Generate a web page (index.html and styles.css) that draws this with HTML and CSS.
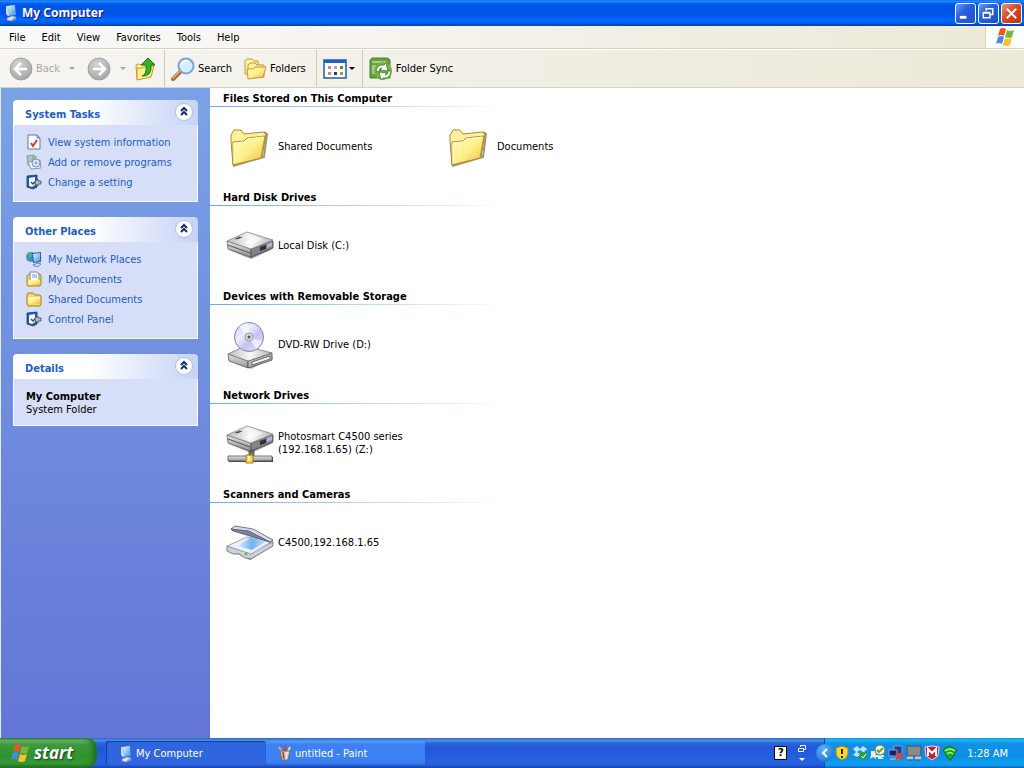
FILE: index.html
```
<!DOCTYPE html>
<html lang="en">
<head>
  <meta charset="utf-8">
  <title>My Computer</title>
  <link rel="stylesheet" href="styles.css">
</head>
<body>
<!-- shared icons -->
<svg class="defs" aria-hidden="true">
  <defs>
    <linearGradient id="g-folder" x1="0" y1="0" x2="1" y2="1">
      <stop offset="0" stop-color="#fffbc0"/><stop offset=".5" stop-color="#fff08a"/><stop offset="1" stop-color="#f0b83c"/>
    </linearGradient>
    <linearGradient id="g-metal" x1="0" y1="0" x2="1" y2="0">
      <stop offset="0" stop-color="#bcbcbc"/><stop offset=".5" stop-color="#f8f8fa"/><stop offset="1" stop-color="#b4b4bc"/>
    </linearGradient>
    <linearGradient id="g-side" x1="0" y1="0" x2="0" y2="1">
      <stop offset="0" stop-color="#e4e4e4"/><stop offset="1" stop-color="#949494"/>
    </linearGradient>
    <linearGradient id="g-disc" x1="0" y1="0" x2="1" y2="1">
      <stop offset="0" stop-color="#c4c8ee"/><stop offset=".35" stop-color="#eceefc"/><stop offset=".6" stop-color="#c4c2f4"/><stop offset="1" stop-color="#e8e8fa"/>
    </linearGradient>
    <linearGradient id="g-glass" x1="0" y1="0" x2="1" y2="0">
      <stop offset="0" stop-color="#e4f2fe"/><stop offset=".5" stop-color="#6cb4f2"/><stop offset="1" stop-color="#d2e2f8"/>
    </linearGradient>
    <linearGradient id="g-screen" x1="0" y1="0" x2="1" y2="1">
      <stop offset="0" stop-color="#e4f6ff"/><stop offset="1" stop-color="#3e9cec"/>
    </linearGradient>
    <radialGradient id="g-ball" cx=".4" cy=".3" r=".8">
      <stop offset="0" stop-color="#d4d4d4"/><stop offset="1" stop-color="#a0a0a0"/>
    </radialGradient>
  </defs>
  <symbol id="i-computer" viewBox="0 0 16 16">
    <path d="M3 1l9-1 1 10-8 1z" fill="#5c9ce4"/>
    <path d="M5 1l7-1v9l-6 1z" fill="url(#g-screen)"/>
    <path d="M3 1h2l1 10H5L3 9z" fill="#c4dcf4"/>
    <path d="M4 13l5-2 4 1v2l-5 2-4-1z" fill="#e0e4ea" stroke="#7c8ca4" stroke-width=".6"/>
    <path d="M9 14l4-2v2l-4 2z" fill="#8098bc"/>
  </symbol>
  <symbol id="i-flag" viewBox="0 0 20 20">
    <path d="M5 2q3-2 6 0L9 9Q6 7 3 9z" fill="#e8552c"/>
    <path d="M12 3q3 2 7 0l-2 7q-3 2-7 0z" fill="#7cb440"/>
    <path d="M3 10q3-2 6 0l-2 7Q4 15 1 17z" fill="#4a8ae4"/>
    <path d="M10 11q3 2 7 0l-2 7q-3 2-7 0z" fill="#f6c32c"/>
  </symbol>
  <symbol id="i-panel" viewBox="0 0 16 16">
    <path d="M1 2l10-1v12l-4 2-6-2z" fill="#245cac" stroke="#123c7c" stroke-width=".8"/>
    <path d="M3 4l6-1v8l-3 2-3-1z" fill="#f0f6ff"/>
    <path d="M5 8l2 2 3-3" fill="none" stroke="#444c58" stroke-width="1.500"/>
    <path d="M9 7l3-2v2h3v3h-3v2L9 10z" fill="#b8bcc4" stroke="#3c4450" stroke-width=".8"/>
  </symbol>
  <symbol id="i-folder-s" viewBox="0 0 16 16">
    <path d="M1 13V4l1-2h5l2 2h5l1 1v8l-1 2H2z" fill="#f8d860" stroke="#b07c18"/>
    <path d="M2 13V7l2-1h10v7z" fill="url(#g-folder)"/>
    <path d="M2 7h12" stroke="#fffce0"/>
  </symbol>
  <symbol id="i-folder" viewBox="0 0 48 48">
    <path d="M7 43l31-9 3-23-3-2" fill="none" stroke="#706848" stroke-width="2" opacity=".7"/>
    <path d="M5 18V12l3-5h7l3 4 19-2 3 2-4 23L7 42z" fill="#fff09c" stroke="#a88a34"/>
    <path d="M7 19l11-1 3-3 18-2-4 22-28 7z" fill="url(#g-folder)" stroke="#b08c30"/>
    <path d="M8 40V20l10-1 4-3 15-2" fill="none" stroke="#fffde0"/>
  </symbol>
  <symbol id="i-drive" viewBox="0 0 48 28">
    <path d="M3 19l22 9 22-10-20 2z" fill="#555" opacity=".6"/>
    <path d="M1 10l24 8v8L2 18z" fill="url(#g-side)" stroke="#666" stroke-width=".8"/>
    <path d="M25 18l22-8v7L25 26z" fill="#84848c" stroke="#444" stroke-width=".8"/>
    <path d="M1 10L21 1l26 8-22 9z" fill="url(#g-metal)" stroke="#888" stroke-width=".8"/>
    <path d="M2 14l22 8" stroke="#555"/>
    <path d="M34 16l6-2v4l-6 2z" fill="#26332c"/>
    <path d="M41 13l5-2v4l-5 2z" fill="#b4b4d8"/>
    <path d="M9 8l5-2M11 8l5-2" stroke="#444"/>
    <path d="M18 12l10-7 9 3-11 6z" fill="#fff" opacity=".55"/>
  </symbol>
</svg>

<header class="titlebar">
  <svg class="titlebar-icon"><use href="#i-computer"/></svg>
  <h1 class="titlebar-text">My Computer</h1>
  <div class="window-buttons">
    <button class="window-btn" aria-label="Minimize">
      <svg viewBox="0 0 20 20"><path d="M4 14h7" stroke="#fff" stroke-width="3"/></svg>
    </button>
    <button class="window-btn" aria-label="Restore">
      <svg viewBox="0 0 20 20"><path d="M7.500 7V5h7v6H12M7 5h8M4.500 9.500h7v5h-7zM4 9h8" fill="none" stroke="#fff" stroke-width="1.500"/></svg>
    </button>
    <button class="window-btn close" aria-label="Close">
      <svg viewBox="0 0 20 20"><path d="M5 5l10 10M15 5L5 15" stroke="#fff" stroke-width="2"/></svg>
    </button>
  </div>
</header>

<nav class="menubar">
  <button class="menu">File</button>
  <button class="menu">Edit</button>
  <button class="menu">View</button>
  <button class="menu">Favorites</button>
  <button class="menu">Tools</button>
  <button class="menu">Help</button>
  <div class="brand"><svg class="brand-icon"><use href="#i-flag"/></svg></div>
</nav>

<div class="toolbar">
  <button class="tool disabled">
    <svg class="tool-icon" viewBox="0 0 24 24"><circle cx="12" cy="12" r="11" fill="url(#g-ball)" stroke="#989898" stroke-width=".8"/><path d="M18 12H7M12 6l-6 6 6 6" fill="none" stroke="#fff" stroke-width="2.600"/></svg>
    Back
  </button>
  <button class="drop disabled" aria-label="Back history"></button>
  <button class="tool forward" aria-label="Forward">
    <svg class="tool-icon" viewBox="0 0 24 24"><circle cx="12" cy="12" r="11" fill="url(#g-ball)" stroke="#989898" stroke-width=".8"/><path d="M6 12h11M12 6l6 6-6 6" fill="none" stroke="#fff" stroke-width="2.600"/></svg>
  </button>
  <button class="drop disabled" aria-label="Forward history"></button>
  <button class="tool up" aria-label="Up">
    <svg class="tool-icon" viewBox="0 0 24 24">
      <path d="M2 8l2-1 5 1 11-2-3 12-14 4z" fill="url(#g-folder)" stroke="#c89830"/>
      <path d="M3 23V11l5 0 2-1 10-1-3 11z" fill="#fff08c" stroke="#c89830"/>
      <path d="M8 19q5-1 4-11H7l7-7 7 7h-4q1 12-9 11z" fill="#38b028" stroke="#187818"/>
    </svg>
  </button>
  <span class="separator"></span>
  <button class="tool">
    <svg class="tool-icon" viewBox="0 0 24 24">
      <path d="M2 22l8-8" stroke="#a86038" stroke-width="4" stroke-linecap="round"/>
      <path d="M2 21l7-7" stroke="#e0a878" stroke-width="2" stroke-linecap="round"/>
      <circle cx="15" cy="9" r="7.500" fill="#d4eefc" stroke="#7ca4d4" stroke-width="2"/>
      <path d="M10 8q2-5 7-4" fill="none" stroke="#fff" stroke-width="2"/>
    </svg>
    Search
  </button>
  <button class="tool folders">
    <svg class="tool-icon" viewBox="0 0 24 24">
      <path d="M2 17V4l2-2h5l2 2h4v13z" fill="url(#g-folder)" stroke="#c89830"/>
      <path d="M5 20V8l2-2h5l2 2h7v12z" fill="#fff09c" stroke="#c89830"/>
      <path d="M5 22L4 12h6l2-2h11l-3 10z" fill="url(#g-folder)" stroke="#c89830"/>
    </svg>
    Folders
  </button>
  <span class="separator"></span>
  <button class="tool views" aria-label="Views">
    <svg class="tool-icon" viewBox="0 0 24 24">
      <path d="M1 3h22v18H1z" fill="#fff" stroke="#1c5cb0" stroke-width="1.500"/>
      <path d="M1 3h22v3H1z" fill="#1c64c4"/>
      <path d="M5 9h3v3H5z" fill="#8c9cc4"/><path d="M11 9h3v3h-3z" fill="#dc9c78"/><path d="M17 9h3v3h-3z" fill="#48943c"/>
      <path d="M5 15h3v3H5z" fill="#d88460"/><path d="M11 15h3v3h-3z" fill="#1c4484"/><path d="M17 15h3v3h-3z" fill="#b8942c"/>
    </svg>
    <span class="caret"></span>
  </button>
  <span class="separator"></span>
  <button class="tool sync">
    <svg class="tool-icon" viewBox="0 0 24 24">
      <path d="M1 3l2-2h16l2 2v18H1z" fill="#68a040" stroke="#4c8030"/>
      <path d="M3 4h14v2H3zM3 8h4v9H3z" fill="#a4cc80"/>
      <circle cx="14" cy="14" r="9" fill="#78b048"/>
      <path d="M7 14q1-7 8-6l2-2 2 8-8-1 2-2q-3 0-3 4z" fill="#f4faee" stroke="#40802c" stroke-width=".8"/>
      <path d="M22 14q-1 8-8 7l-2 2-2-8 8 1-2 2q3 0 3-4z" fill="#f4faee" stroke="#40802c" stroke-width=".8"/>
    </svg>
    Folder Sync
  </button>
</div>

<div class="content">
  <aside class="sidebar">
    <section class="panel">
      <div class="panel-head">
        <h2>System Tasks</h2>
        <button class="collapse" aria-label="Collapse System Tasks"><svg viewBox="0 0 16 16"><path d="M5 7l3-3 3 3M5 11l3-3 3 3"/></svg></button>
      </div>
      <ul class="panel-body">
        <li><a href="#"><svg viewBox="0 0 16 16"><path d="M2 1h9l3 3v11H2z" fill="#fafcff" stroke="#6478a0"/><path d="M11 1v3h3" fill="none" stroke="#6478a0"/><path d="M5 9l2 3 4-6" fill="none" stroke="#d43c2c" stroke-width="2"/></svg>View system information</a></li>
        <li><a href="#"><svg viewBox="0 0 16 16"><path d="M1 2l7-1 1 5-4 6-3-1z" fill="#b4c0cc" stroke="#8898a8"/><path d="M6 2h5l-1 4H6z" fill="#8cbc80"/><path d="M2 8l12-2 1 8-10 1z" fill="#f0f4fa" stroke="#8898b0"/><circle cx="10" cy="9" r="4" fill="#dce8f8" stroke="#7c90b4"/><circle cx="10" cy="9" r="1" fill="#fff" stroke="#7c90b4"/></svg>Add or remove programs</a></li>
        <li><a href="#"><svg><use href="#i-panel"/></svg>Change a setting</a></li>
      </ul>
    </section>

    <section class="panel">
      <div class="panel-head">
        <h2>Other Places</h2>
        <button class="collapse" aria-label="Collapse Other Places"><svg viewBox="0 0 16 16"><path d="M5 7l3-3 3 3M5 11l3-3 3 3"/></svg></button>
      </div>
      <ul class="panel-body">
        <li><a href="#"><svg viewBox="0 0 16 16"><circle cx="5" cy="6" r="5" fill="#3c8cd8"/><path d="M2 3q3-2 4 0T4 7Q1 7 2 3z" fill="#54b858"/><path d="M6 2l9-1v10l-8 1z" fill="#2c5cb0"/><path d="M7 3l7-1v8l-6 1z" fill="url(#g-screen)"/><path d="M7 14l5-2 3 1-4 3z" fill="#d8dce4" stroke="#505c74" stroke-width=".7"/></svg>My Network Places</a></li>
        <li><a href="#"><svg viewBox="0 0 16 16"><path d="M1 13V5l2-2h11l1 2v8l-1 2H2z" fill="#f8d860" stroke="#b07c18"/><path d="M4 1h7l2 2v7H4z" fill="#fff" stroke="#7088b8"/><path d="M6 4h5M6 6h5" stroke="#6c94dc"/><path d="M2 9h12v5H2z" fill="url(#g-folder)"/></svg>My Documents</a></li>
        <li><a href="#"><svg><use href="#i-folder-s"/></svg>Shared Documents</a></li>
        <li><a href="#"><svg><use href="#i-panel"/></svg>Control Panel</a></li>
      </ul>
    </section>

    <section class="panel">
      <div class="panel-head">
        <h2>Details</h2>
        <button class="collapse" aria-label="Collapse Details"><svg viewBox="0 0 16 16"><path d="M5 7l3-3 3 3M5 11l3-3 3 3"/></svg></button>
      </div>
      <div class="panel-body details">
        <strong>My Computer</strong>
        <p>System Folder</p>
      </div>
    </section>
  </aside>

  <main class="files">
    <section class="group">
      <h2>Files Stored on This Computer</h2>
      <div class="tiles">
        <a class="tile" href="#"><svg><use href="#i-folder"/></svg><span>Shared Documents</span></a>
        <a class="tile" href="#"><svg><use href="#i-folder"/></svg><span>Documents</span></a>
      </div>
    </section>
    <section class="group">
      <h2>Hard Disk Drives</h2>
      <div class="tiles">
        <a class="tile" href="#"><svg viewBox="0 0 48 48"><use href="#i-drive" y="9" width="48" height="28"/></svg><span>Local Disk (C:)</span></a>
      </div>
    </section>
    <section class="group">
      <h2>Devices with Removable Storage</h2>
      <div class="tiles">
        <a class="tile" href="#">
          <svg viewBox="0 0 48 48">
            <path d="M4 38l21 10 22-11-3-4z" fill="#555" opacity=".5"/>
            <path d="M2 33l20 7v7L3 40z" fill="url(#g-side)" stroke="#555" stroke-width=".8"/>
            <path d="M22 40l24-8v7l-24 8z" fill="#b4b4b4" stroke="#444" stroke-width=".8"/>
            <path d="M2 33l17-8 27 7-24 8z" fill="url(#g-metal)" stroke="#777" stroke-width=".8"/>
            <path d="M26 41l18-6v3l-18 6z" fill="#f4f4f4" stroke="#555" stroke-width=".8"/>
            <circle cx="23" cy="16" r="14.500" fill="url(#g-disc)" stroke="#84849c"/>
            <path d="M23 16L13 6q4-4 9-4z" fill="#fff" opacity=".6"/>
            <path d="M23 16l7 12q4-3 6-8z" fill="#fff" opacity=".6"/>
            <circle cx="23" cy="16" r="4" fill="#d8d8e0" stroke="#9c9cb0"/>
            <circle cx="23" cy="16" r="1.500" fill="#555"/>
          </svg>
          <span>DVD-RW Drive (D:)</span>
        </a>
      </div>
    </section>
    <section class="group">
      <h2>Network Drives</h2>
      <div class="tiles">
        <a class="tile" href="#">
          <svg viewBox="0 0 48 48">
            <path d="M23 30h5v7h-5z" fill="#777" stroke="#444" stroke-width=".8"/>
            <path d="M3 37h44v5H3z" fill="#444"/>
            <path d="M2 36h44v5H2z" fill="url(#g-side)" stroke="#555" stroke-width=".8"/>
            <path d="M20 35h7v8h-7z" fill="#f8d450" stroke="#a07818"/>
            <path d="M22 36h2v5h-2z" fill="#fff6b0"/>
            <use href="#i-drive" y="5" width="48" height="28"/>
          </svg>
          <span>Photosmart C4500 series (192.168.1.65) (Z:)</span>
        </a>
      </div>
    </section>
    <section class="group">
      <h2>Scanners and Cameras</h2>
      <div class="tiles">
        <a class="tile" href="#">
          <svg viewBox="0 0 48 48">
            <path d="M4 34l8 1 12 6 23-15-21 9z" fill="#445" opacity=".7"/>
            <path d="M1 27l21 6 25-10v4L25 40l-6-1-6-4H7l-6-3z" fill="#ccd0dc" stroke="#667" stroke-width=".8"/>
            <path d="M1 27l20-9 26 4-22 13z" fill="#eef0f6" stroke="#88909c" stroke-width=".8"/>
            <path d="M11 27l13-8 17 3-15 9z" fill="url(#g-glass)"/>
            <path d="M5 10l4-3 18 3 20 11-3 2-20-7z" fill="#dcdcec" stroke="#556" stroke-width=".8"/>
            <path d="M5 10l18 2 21 11-20-6L7 12z" fill="#7c849c" stroke="#556" stroke-width=".8"/>
            <circle cx="20" cy="35" r="1.500" fill="#48c848"/>
          </svg>
          <span>C4500,192.168.1.65</span>
        </a>
      </div>
    </section>
  </main>
</div>

<footer class="taskbar">
  <button class="start"><svg class="start-icon"><use href="#i-flag"/></svg>start</button>
  <div class="tasks">
    <button class="task active"><svg><use href="#i-computer"/></svg>My Computer</button>
    <button class="task">
      <svg viewBox="0 0 16 16">
        <path d="M6 9L2 2" stroke="#e0b050" stroke-width="2"/><path d="M8 9V1" stroke="#c84830" stroke-width="2"/><path d="M10 9l3-7" stroke="#f0d8a0" stroke-width="2"/>
        <path d="M3 6h10l-2 9H5z" fill="#d8c8b8" stroke="#6c5850" stroke-width=".8"/>
        <path d="M6 7l1 7" stroke="#a03828" stroke-width="1.500"/><path d="M10 7l-1 7" stroke="#fff"/>
      </svg>
      untitled - Paint
    </button>
  </div>
  <div class="langbar">
    <button class="help" aria-label="Help">?</button>
    <button class="restore" aria-label="Language bar options">
      <svg viewBox="0 0 10 18"><path d="M3.500 3V1.500h5v4H7M1.500 4.500h5v3h-5z" fill="none" stroke="#fff"/><path d="M2 14h6l-3 3z" fill="#fff"/></svg>
    </button>
  </div>
  <div class="tray">
    <button class="tray-toggle" aria-label="Show hidden icons"><svg viewBox="0 0 18 18"><path d="M11 5L7 9l4 4" fill="none" stroke="#fff" stroke-width="2"/></svg></button>
    <div class="tray-icons">
      <svg viewBox="0 0 16 16"><path d="M8 1l6 2v5q0 5-6 7-6-2-6-7V3z" fill="#fcd434" stroke="#a88010"/><path d="M8 4v5M8 11v2" stroke="#302400" stroke-width="2"/></svg>
      <svg viewBox="0 0 16 16"><path d="M1 4l4-3 3 3 3-3 4 3-3 3 3 3-4 2-3-2-3 2-4-2 3-3z" fill="#b8e4fc"/><path d="M5 7l3-2 3 2-3 2z" fill="#2c84d0"/><circle cx="11" cy="11" r="4" fill="#2ca038"/><path d="M9 11l2 2 3-4" fill="none" stroke="#fff"/></svg>
      <svg viewBox="0 0 16 16"><path d="M1 6h4l1 3v5l-3-2-3 2 1-4zM8 9l6 5H8zM1 10h13v2H1z" fill="#e8ece8"/><circle cx="10" cy="5" r="5" fill="#f0f4ec" stroke="#607860"/><path d="M7 5l2 2 4-4" fill="none" stroke="#68a81c" stroke-width="2"/></svg>
      <svg viewBox="0 0 16 16"><path d="M6 1h8v8H6z" fill="#243c8c" stroke="#8898bc"/><path d="M1 5h8v6H1z" fill="#10246c" stroke="#90a0c4"/><path d="M2 13h9v2H2z" fill="#98a4bc"/><path d="M8 8l7 7M15 8l-7 7" stroke="#e83c30" stroke-width="2"/></svg>
      <svg viewBox="0 0 16 16"><path d="M1 1h14v10H1z" fill="#888c88" stroke="#444c5c"/><path d="M1 13h6M9 13h6" stroke="#c4c8cc" stroke-width="3"/><path d="M1 15h6M9 15h6" stroke="#445068"/></svg>
      <svg viewBox="0 0 16 16"><path d="M1 2l7-1 7 1-1 9-6 4-6-4z" fill="#c81c34" stroke="#f0d8dc"/><path d="M4 11V4l4 4 4-4v7" fill="none" stroke="#fff" stroke-width="2"/></svg>
      <svg viewBox="0 0 16 16"><path d="M1 5q7-7 14 0L9 15H7z" fill="#18a828" stroke="#107018"/><path d="M3 6q5-4 10 0M5 9q3-3 6 0" fill="none" stroke="#9cf49c" stroke-width="1.500"/></svg>
    </div>
    <time class="clock">1:28 AM</time>
  </div>
</footer>
</body>
</html>
```

FILE: styles.css
```
* {
  box-sizing: border-box;
}
body {
  display: flex;
  flex-direction: column;
  min-height: 100vh;
  margin: 0;
  background: #fff;
  color: #000;
  font: 11px/13px Tahoma, "DejaVu Sans Condensed", "Noto Sans", sans-serif;
}
h1, h2, p, ul {
  margin: 0;
  padding: 0;
}
h2 {
  font-size: 11px;
}
ul {
  list-style: none;
}
a {
  color: inherit;
  text-decoration: none;
}
button {
  margin: 0;
  padding: 0;
  border: 0;
  background: none;
  color: inherit;
  font: inherit;
}
.defs {
  position: absolute;
  width: 0;
  height: 0;
}

/* title bar */
.titlebar {
  display: flex;
  align-items: center;
  height: 26px;
  padding: 0 2px 0 3px;
  background: linear-gradient(#0058ee 0%, #3593ff 4%, #127dff 8%, #036ffc 10%, #0262ee 14%, #0057e5 20%, #0054e3 24%, #0055eb 56%, #005bf5 66%, #026afe 76%, #0062ef 86%, #0052d6 92%, #0040ab 100%);
}
.titlebar-icon {
  width: 16px;
  height: 16px;
}
.titlebar-text {
  margin-left: 3px;
  color: #fff;
  font: bold 12px/16px "Trebuchet MS", "Noto Sans", sans-serif;
  text-shadow: 1px 1px #0f1089;
}
.window-buttons {
  display: flex;
  gap: 2px;
  margin-left: auto;
}
.window-btn {
  width: 21px;
  height: 21px;
  border: 1px solid #fff;
  border-radius: 3px;
  background: linear-gradient(135deg, #6c9cf8, #2a5fe0 40%, #1c50cc);
}
.window-btn.close {
  background: linear-gradient(135deg, #f09478, #dc4a24 45%, #b83410);
}
.window-btn svg {
  display: block;
  width: 19px;
  height: 19px;
}

/* menus */
.menubar {
  display: flex;
  height: 23px;
  padding-left: 1px;
  border-bottom: 1px solid #d8d2bd;
  background: linear-gradient(90deg, #fafafa, #ece9d8);
}
.menu {
  padding: 0 8px;
}
.brand {
  display: flex;
  align-items: center;
  justify-content: center;
  width: 39px;
  margin-left: auto;
  border-left: 1px solid #d8d2bd;
  background: #fff;
}
.brand-icon {
  width: 20px;
  height: 20px;
}

/* toolbar */
.toolbar {
  display: flex;
  align-items: center;
  height: 39px;
  padding-left: 9px;
  border-top: 1px solid #fff;
  border-bottom: 1px solid #d8d2bd;
  background: linear-gradient(90deg, #f6f5f2, #ece9d8);
}
.tool {
  display: flex;
  align-items: center;
  gap: 3px;
}
.tool-icon {
  width: 24px;
  height: 24px;
}
.disabled {
  color: #aca899;
}
.drop {
  width: 23px;
  height: 24px;
}
.drop::before, .caret {
  content: "";
  display: block;
  width: 0;
  margin: 0 auto;
  border: 3px solid transparent;
  border-top-color: currentColor;
  border-bottom: 0;
}
.forward {
  margin-left: 4px;
}
.up {
  margin-right: 6px;
}
.separator {
  align-self: stretch;
  width: 1px;
  margin-right: 6px;
  background: #cfcbbc;
}
.folders {
  margin: 0 4px 0 5px;
  padding: 0 6px;
}
.views {
  gap: 2px;
  margin-right: 7px;
}

/* content */
.content {
  display: flex;
  flex: 1;
}
.sidebar {
  display: flex;
  flex-direction: column;
  gap: 15px;
  width: 210px;
  padding: 12px;
  border-left: 1px solid #e4ecfa;
  background: linear-gradient(#7ba2e7, #6375d6);
}
.panel-head {
  display: flex;
  align-items: center;
  justify-content: space-between;
  height: 25px;
  padding: 0 5px 0 12px;
  border-radius: 4px 4px 0 0;
  background: linear-gradient(90deg, #fff 40%, #c6d3f7);
  color: #215dc6;
}
.panel-head h2 {
  padding-top: 3px;
}
.collapse {
  padding-bottom: 2px;
}
.collapse svg {
  display: block;
  width: 18px;
  height: 18px;
  border: 1px solid #b4c0dc;
  border-radius: 50%;
  background: #fff;
  fill: none;
  stroke: #123070;
  stroke-width: 2px;
}
.panel-body {
  padding: 7px 12px 9px;
  border: 1px solid #fff;
  border-top: 0;
  background: #d6dff7;
  color: #215dc6;
}
.panel-body a {
  display: flex;
  align-items: center;
  gap: 6px;
  height: 20px;
}
.panel-body svg {
  width: 16px;
  height: 16px;
}
.details {
  padding-top: 11px;
  color: #000;
}

.files {
  flex: 1;
}
.group h2 {
  height: 19px;
  padding: 4px 0 0 13px;
  background: linear-gradient(90deg, #70a8e8, #fff) left bottom / 295px 1px no-repeat;
}
.tiles {
  display: flex;
  flex-wrap: wrap;
  padding-left: 16px;
}
.tile {
  display: flex;
  align-items: center;
  gap: 4px;
  width: 219px;
  height: 80px;
  padding-right: 40px;
}
.tile svg {
  flex: none;
  width: 48px;
  height: 48px;
}
.tile span {
  padding-bottom: 2px;
}

/* taskbar */
.taskbar {
  display: flex;
  height: 30px;
  background: linear-gradient(#3165c4, #4490e6 8%, #3883e5 12%, #2663da 18%, #2157d6 38%, #245ddb 54%, #2562df 86%, #2158d4 92%, #1941a5);
  color: #fff;
}
.start {
  display: flex;
  align-items: center;
  gap: 4px;
  width: 97px;
  padding: 0 0 1px 10px;
  border-radius: 0 10px 10px 0;
  background: linear-gradient(#3c8c3c, #70b470 8%, #3c9a3c 22%, #2f922f 60%, #389838 85%, #1f6c1f);
  box-shadow: inset -4px 0 5px #1f701f;
  font: italic bold 17px/22px "Franklin Gothic Medium", "Open Sans", sans-serif;
  text-shadow: 1px 1px 2px #123c12;
}
.start-icon {
  width: 20px;
  height: 20px;
}
.tasks {
  display: flex;
  flex: 1;
  gap: 1px;
  padding: 3px 0 3px 9px;
}
.task {
  display: flex;
  align-items: center;
  gap: 2px;
  width: 159px;
  padding-left: 11px;
  border-radius: 2px;
  background: linear-gradient(#5c9cfa, #3c81f3 15%, #3c81f3 85%, #3070e0);
}
/* the pressed button pushes its label in by a pixel */
.task.active {
  padding: 1px 0 0 12px;
  background: #2f66e0;
  box-shadow: inset 1px 1px 1px #173c98;
}
.task svg {
  width: 16px;
  height: 16px;
}
.langbar {
  display: flex;
  align-items: center;
  gap: 10px;
  padding-right: 17px;
}
.help {
  width: 13px;
  height: 14px;
  border: 1px solid #000;
  background: #fffff0;
  color: #000;
  font-weight: bold;
  line-height: 12px;
}
.restore svg {
  display: block;
  width: 10px;
  height: 18px;
}
.tray {
  display: flex;
  align-items: center;
  padding-right: 16px;
  border-left: 1px solid #0a4c9c;
  background: linear-gradient(#139ee9, #18b5f2 10%, #139beb 14%, #1290e8 19%, #0d8dea 63%, #0d9ff1 81%, #119be9 91%, #095bc9);
}
.tray-toggle {
  margin-left: -9px;
}
.tray-toggle svg {
  display: block;
  width: 18px;
  height: 18px;
  border-radius: 50%;
  background: radial-gradient(circle at 40% 30%, #58b4fa, #1464d0);
}
.tray-icons {
  display: flex;
  gap: 2px;
  margin-right: 9px;
}
.tray-icons svg {
  width: 16px;
  height: 16px;
}
```
